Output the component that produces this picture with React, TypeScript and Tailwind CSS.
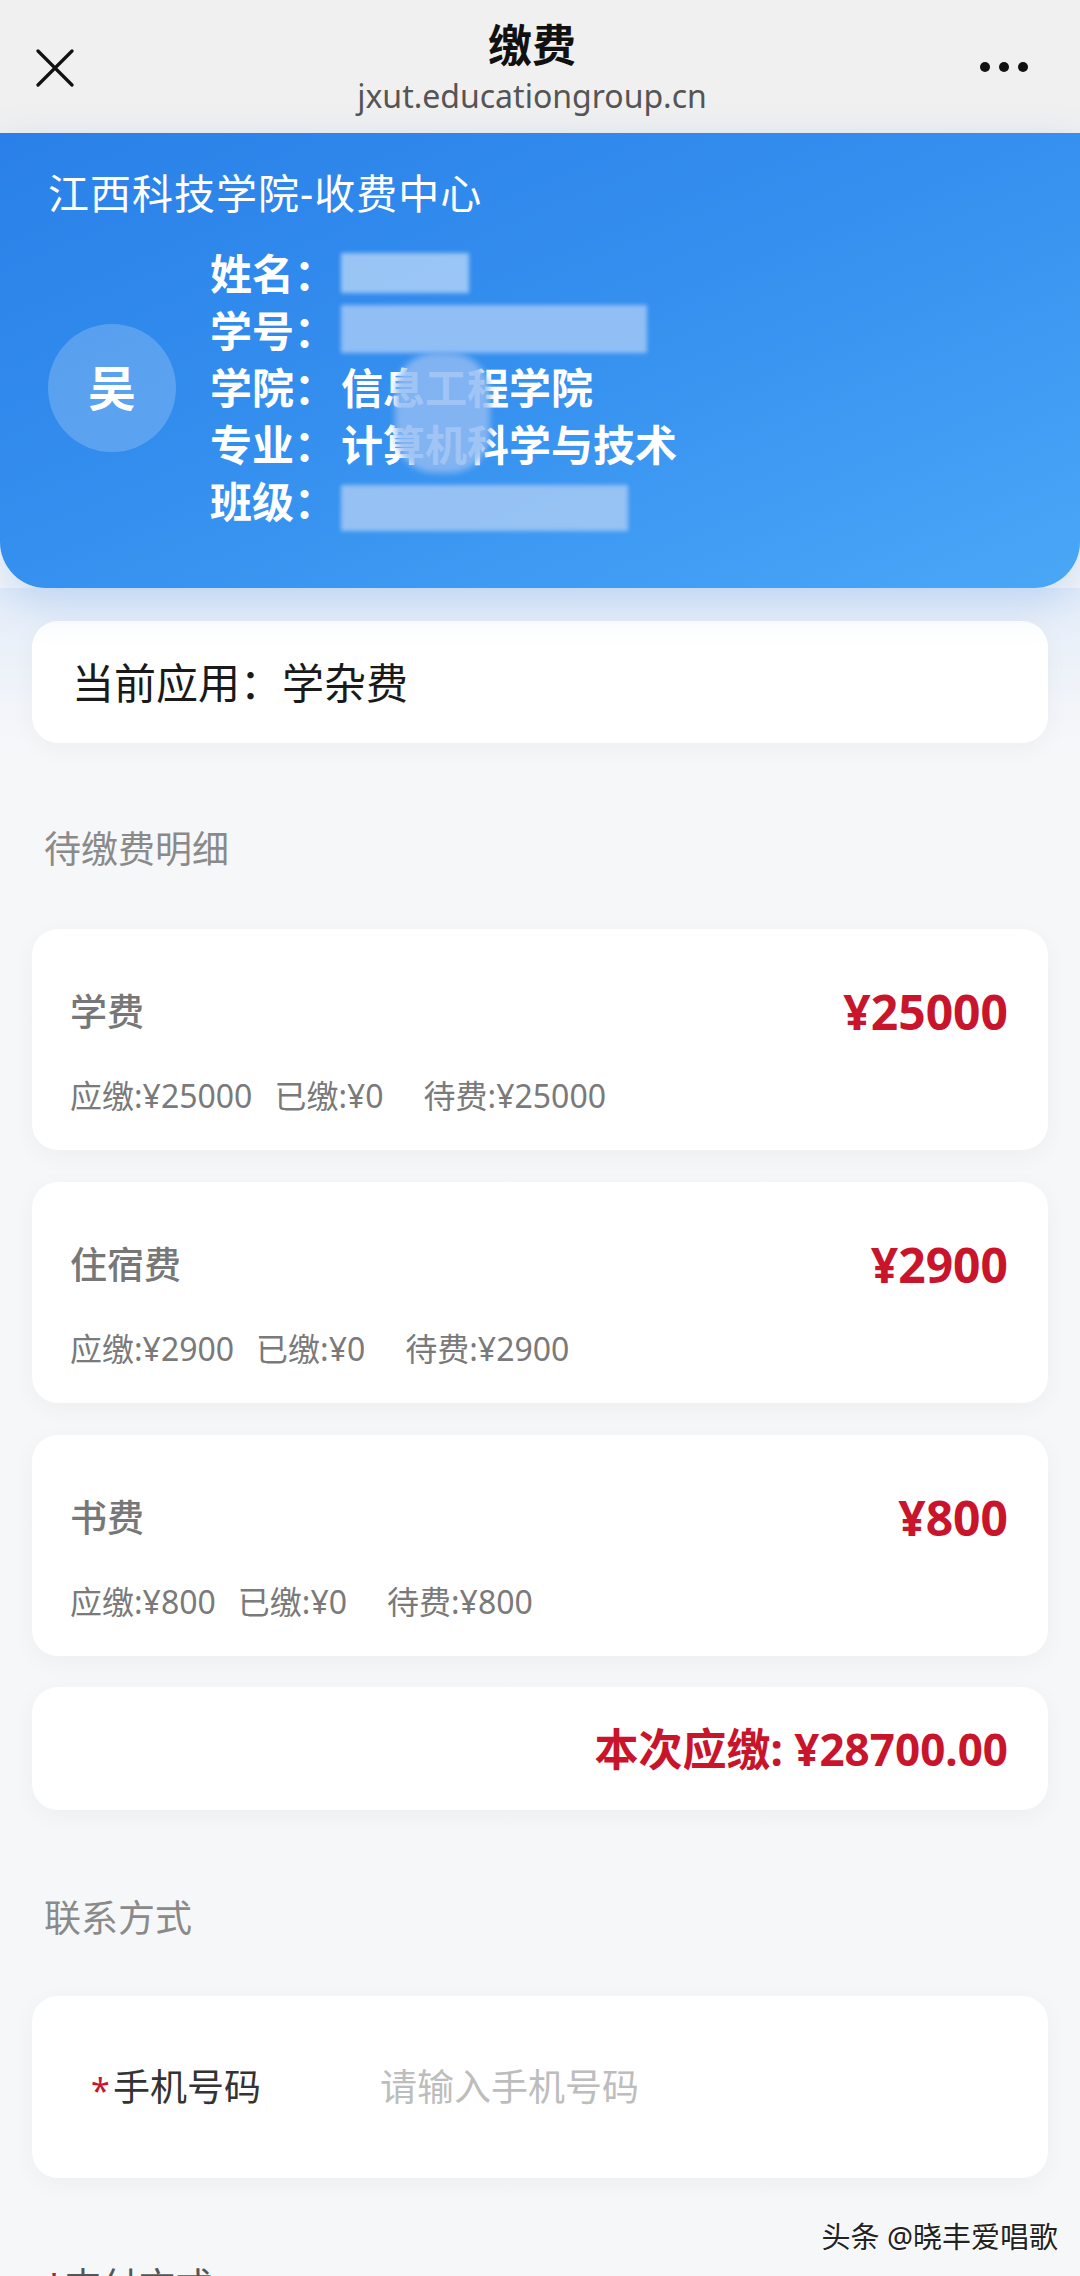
const fees = [
  { name: "学费", amount: "25000" },
  { name: "住宿费", amount: "2900" },
  { name: "书费", amount: "800" },
];

const cjk = "font-['Noto_Sans','Noto_Sans_CJK_SC',sans-serif]";

function InfoLine({ label, value }: { label: string; value?: string }) {
  return (
    <div className="flex h-[57px] items-center text-[42px] font-bold leading-[57px] text-white">
      <span className="w-[131px] shrink-0">{label}：</span>
      <span>{value}</span>
    </div>
  );
}

export default function App() {
  return (
    <div className={`relative flex min-h-[2276px] w-[1080px] flex-col overflow-hidden bg-[#f6f7f9] ${cjk}`}>
      {/* top bar */}
      <div className="grid h-[133px] grid-cols-[1fr_auto_1fr] items-center bg-[#f0f0f0] pl-[36px] pr-[52px]">
        <svg width="38" height="38" viewBox="0 0 38 38" className="mt-[2px]">
          <path d="M2 2 L36 36 M36 2 L2 36" stroke="#111" strokeWidth="3.2" strokeLinecap="round" />
        </svg>
        <div className="flex flex-col items-center">
          <span className="mt-[4px] text-[44px] font-bold leading-[50px] text-[#111]">缴费</span>
          <span className="mt-[4px] text-[32px] leading-[44px] text-[#555]">jxut.educationgroup.cn</span>
        </div>
        <div className="flex w-[48px] items-center justify-between justify-self-end">
          <span className="h-[10px] w-[10px] rounded-full bg-[#111]" />
          <span className="h-[10px] w-[10px] rounded-full bg-[#111]" />
          <span className="h-[10px] w-[10px] rounded-full bg-[#111]" />
        </div>
      </div>

      {/* student card */}
      <div className="relative z-10 rounded-b-[46px] bg-gradient-to-br from-[#2a80e8] via-[#3590ef] to-[#4aa7f7] px-[48px] pt-[34px] pb-[58px] shadow-[0_14px_40px_rgba(80,140,220,0.25)]">
        <div className="text-[41px] leading-[52px] tracking-[1px] text-white">江西科技学院-收费中心</div>
        <div className="mt-[26px] flex items-center gap-[34px]">
          <div className="flex h-[128px] w-[128px] items-center justify-center rounded-full bg-white/20 text-[48px] font-bold text-white">
            吴
          </div>
          <div className="relative flex flex-col">
            <InfoLine label="姓名" />
            <InfoLine label="学号" />
            <InfoLine label="学院" value="信息工程学院" />
            <InfoLine label="专业" value="计算机科学与技术" />
            <InfoLine label="班级" />
            {/* mosaic over private data */}
            <div className="absolute left-[131px] top-[8px] h-[40px] w-[128px] bg-[#b4d3f7]/80 blur-[2px]" />
            <div className="absolute left-[131px] top-[60px] h-[48px] w-[306px] bg-[#a9cbf6]/80 blur-[2px]" />
            <div className="absolute left-[185px] top-[108px] h-[120px] w-[95px] rounded-[40px] bg-[#8fbaf2]/85 blur-[3px]" />
            <div className="absolute left-[131px] top-[240px] h-[46px] w-[287px] bg-[#a6c9f5]/85 blur-[2px]" />
          </div>
        </div>
      </div>

      {/* content */}
      <div className="flex flex-col bg-gradient-to-b from-[#e4edf9] to-[#f6f7f9] to-[9%] px-[32px] pt-[33px]">
        <div className="flex h-[122px] items-center rounded-[26px] bg-white pl-[40px] text-[42px] text-[#1a1a1a] shadow-[0_6px_24px_rgba(0,0,0,0.04)]">
          当前应用：学杂费
        </div>

        <div className="pl-[12px] pt-[81px] pb-[55px] text-[37px] leading-[50px] text-[#8a8a8a]">待缴费明细</div>

        <div className="flex flex-col gap-[32px]">
          {fees.map((f) => (
            <div
              key={f.name}
              className="flex h-[221px] flex-col rounded-[26px] bg-white pl-[38px] pr-[40px] pt-[55px] shadow-[0_6px_24px_rgba(0,0,0,0.04)]"
            >
              <div className="flex h-[56px] items-center justify-between">
                <span className="text-[37px] font-medium text-[#777]">{f.name}</span>
                <span className="text-[48px] font-bold text-[#c9152b]">¥{f.amount}</span>
              </div>
              <div className="mt-[34px] flex h-[44px] items-center text-[32px] text-[#7a7a7a]">
                <span className="mr-[22px]">应缴:¥{f.amount}</span>
                <span className="mr-[40px]">已缴:¥0</span>
                <span>待费:¥{f.amount}</span>
              </div>
            </div>
          ))}
          <div className="-mt-[1px] flex h-[123px] items-center justify-end rounded-[26px] bg-white pr-[40px] text-[44px] font-bold text-[#c9152b] shadow-[0_6px_24px_rgba(0,0,0,0.04)]">
            本次应缴: ¥28700.00
          </div>
        </div>

        <div className="pl-[12px] pt-[83px] pb-[53px] text-[37px] leading-[50px] text-[#8a8a8a]">联系方式</div>

        <div className="flex h-[182px] items-center rounded-[26px] bg-white pl-[59px] shadow-[0_6px_24px_rgba(0,0,0,0.04)]">
          <span className="mt-[6px] w-[22px] text-[34px] text-[#c9152b]">*</span>
          <span className="w-[267px] text-[37px] text-[#333]">手机号码</span>
          <span className="text-[37px] text-[#bdbdbd]">请输入手机号码</span>
        </div>

        <div className="flex pl-[12px] pt-[83px] text-[37px] leading-[50px] text-[#555]">
          <span className="text-[#c9152b]">*</span>
          <span>支付方式</span>
        </div>
      </div>

      {/* watermark */}
      <div className="absolute right-[22px] top-[2218px] text-[29px] leading-[38px] text-[#222] [text-shadow:0_0_2px_#fff,0_0_2px_#fff,1px_1px_1px_#fff]">
        头条 @晓丰爱唱歌
      </div>
    </div>
  );
}
